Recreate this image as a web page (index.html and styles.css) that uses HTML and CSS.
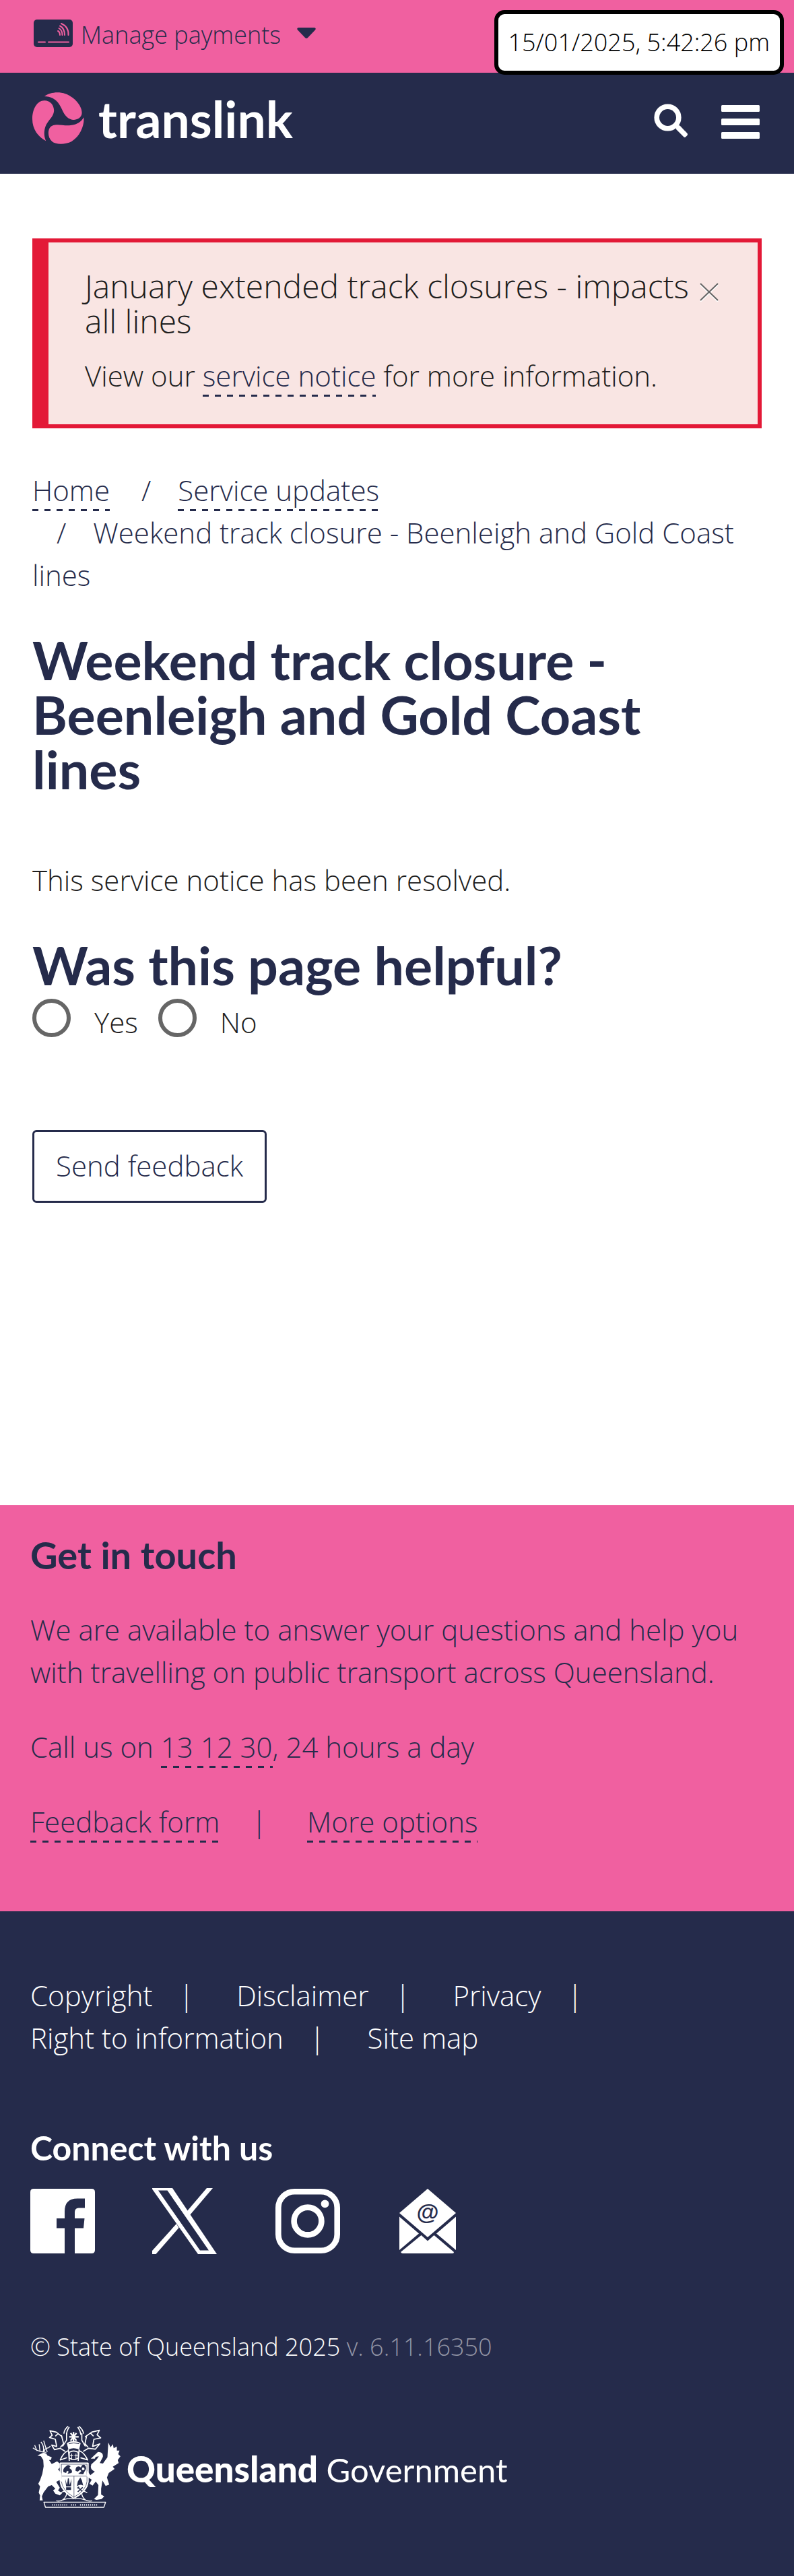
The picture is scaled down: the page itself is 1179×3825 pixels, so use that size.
FILE: index.html
```html
<!DOCTYPE html>
<html lang="en">
<head>
<meta charset="utf-8">
<meta name="viewport" content="width=device-width, initial-scale=1">
<title>Weekend track closure - Beenleigh and Gold Coast lines | Translink</title>
<link rel="stylesheet" href="styles.css">
</head>
<body>
<time class="stamp" datetime="2025-01-15T17:42:26">15/01/2025, 5:42:26 pm</time>

<div class="topbar">
  <button class="payments" type="button">
    <svg class="payments-card" viewBox="0 0 58 41" aria-hidden="true">
      <rect width="58" height="41" rx="5" fill="#252b4b"/>
      <g fill="none" stroke="#f060a0" stroke-width="2" stroke-linecap="round">
        <path d="M7 33.500H17M22 33.500H52"/>
        <path d="M36 17C38 18 39 20 39 23M37.500 13C41 15 42.500 18 42.500 23M39 9.500C44 12 46 17 46 23M41 6C48 9 52 15 51.500 23"/>
      </g>
    </svg>
    <span>Manage payments</span>
    <svg class="payments-caret" viewBox="0 0 28 16" aria-hidden="true"><path d="M2 0H26Q29 1 27 3.500L16 15Q14 17 12 15L1 3.500Q-1 1 2 0Z" fill="#252b4b"/></svg>
  </button>
</div>

<header class="header">
  <a class="brand" href="#">
    <svg class="brand-mark" viewBox="24 20 232 232" aria-hidden="true">
      <g fill="#f060a0">
        <path d="M78 38C110 15 165 12 205 45C240 72 250 105 244 122C235 145 200 152 178 130C160 112 158 95 145 75C130 50 105 38 78 38Z"/>
        <path d="M85 238C50 220 24 185 24 140C24 95 45 57 78 57C105 57 121 78 121 103C119 132 95 142 82 175C74 200 78 222 85 238Z"/>
        <path d="M254 132C258 165 240 215 200 240C170 255 130 255 112 240C92 222 92 190 105 175C125 155 160 172 195 168C225 164 243 152 254 132Z"/>
      </g>
    </svg>
    <span class="brand-name">translink</span>
  </a>
  <div class="tools">
    <button class="tool" type="button" aria-label="Search">
      <svg width="50" height="50" viewBox="0 0 50 50"><circle cx="20.500" cy="20.500" r="16.300" fill="none" stroke="#fff" stroke-width="7.600"/><path d="M33 34.500L36.500 32Q38 32 39 33L49.500 44Q50.500 45.500 49.500 47L47 49.500Q45.500 50.500 44 49L33.500 38.500Q32.500 37 33 34.500Z" fill="#fff"/></svg>
    </button>
    <button class="tool tool-menu" type="button" aria-label="Menu">
      <svg width="57" height="50" viewBox="0 0 57 50" fill="#fff"><rect width="57" height="10" rx="1.500"/><rect y="20" width="57" height="10" rx="1.500"/><rect y="40" width="57" height="10" rx="1.500"/></svg>
    </button>
  </div>
</header>

<main class="main">
  <section class="alert">
    <div class="alert-body">
      <h2 class="alert-title">January extended track closures - impacts all lines</h2>
      <p>View our <a class="link" href="#">service notice</a> for more information.</p>
    </div>
    <button class="alert-close" type="button" aria-label="Close">
      <svg width="28" height="28" viewBox="0 0 28 28" fill="none"><path d="M1 3L27 28M27 3L1 28" stroke="#fff" stroke-width="2"/><path d="M1 1L27 26M27 1L1 26" stroke="#666" stroke-width="2"/></svg>
    </button>
  </section>

  <nav aria-label="Breadcrumb">
    <ol class="crumbs">
      <li><a class="link" href="#">Home</a></li>
      <li><a class="link" href="#">Service updates</a></li>
      <li class="crumb-current">Weekend track closure - Beenleigh and Gold Coast lines</li>
    </ol>
  </nav>

  <h1 class="heading page-title">Weekend track closure - Beenleigh and Gold Coast lines</h1>
  <p class="notice">This service notice has been resolved.</p>

  <form class="feedback">
    <h2 class="heading" id="helpful">Was this page helpful?</h2>
    <div class="choices" role="radiogroup" aria-labelledby="helpful">
      <input class="radio" type="radio" name="helpful" id="helpful-yes"><label for="helpful-yes">Yes</label>
      <input class="radio" type="radio" name="helpful" id="helpful-no"><label for="helpful-no">No</label>
    </div>
    <button class="send" type="button">Send feedback</button>
  </form>
</main>

<section class="contact">
  <h2 class="contact-title">Get in touch</h2>
  <p>We are available to answer your questions and help you with travelling on public transport across Queensland.</p>
  <p>Call us on <a class="link" href="#">13 12 30</a>, 24 hours a day</p>
  <ul class="bar-list contact-links">
    <li><a class="link" href="#">Feedback form</a></li>
    <li><a class="link" href="#">More options</a></li>
  </ul>
</section>

<footer class="footer">
  <ul class="bar-list footer-links">
    <li><a href="#">Copyright</a></li>
    <li><a href="#">Disclaimer</a></li>
    <li><a href="#">Privacy</a></li>
    <li><a href="#">Right to information</a></li>
    <li><a href="#">Site map</a></li>
  </ul>
  <h2 class="connect-title">Connect with us</h2>
  <div class="social">
    <a href="#" aria-label="Facebook"><svg width="96" height="96" viewBox="0 0 96 96"><path fill="#fff" fill-rule="evenodd" d="M5 0H91Q96 0 96 5V91Q96 96 91 96H5Q0 96 0 91V5Q0 0 5 0ZM51 96V58.500H39V44H51V34C51 21 57 14.500 70 14.500H81V28.500H74C68 28.500 66 30 66 36V44H80.500L79 58.500H66V96Z"/></svg></a>
    <a href="#" aria-label="X"><svg width="98" height="98" viewBox="1 0 98 98" fill="#fff"><path fill-rule="evenodd" d="M0 0H31L97 98H69ZM10 3.500L72 92.500H85L23.500 3.500Z"/><path d="M82 0H91L57 40L53 34ZM37 53L0 94V98H6.500L40.500 59Z"/></svg></a>
    <a href="#" aria-label="Instagram"><svg width="96" height="96" viewBox="0 0 96 96" fill="none" stroke="#fff"><rect x="4.300" y="4.300" width="87.400" height="87.400" rx="24" stroke-width="8.600"/><circle cx="48" cy="48" r="20.400" stroke-width="8.600"/><circle cx="73.500" cy="22.300" r="5.900" fill="#fff" stroke="none"/></svg></a>
    <a href="#" aria-label="Email"><svg width="90" height="96" viewBox="-3 0 90 96" fill="#fff"><path d="M42 0L84 36L42 72L0 36Z"/><path d="M0 41.500L29 66.500L0 91ZM84 41.500L55 66.500L84 91Z"/><path d="M32.500 69L42 77.500L51.500 69L81 94Q81 96 79 96H5Q3 96 2 94Z"/><text class="mail-at" x="42" y="46" text-anchor="middle">@</text></svg></a>
  </div>
  <p class="legal">© State of Queensland 2025 <span class="version">v. 6.11.16350</span></p>
  <a class="gov" href="#">
    <svg class="gov-crest" width="131" height="122" viewBox="26 20 392 366" fill="none" stroke="#fff" stroke-width="5" stroke-linejoin="round" aria-hidden="true">
      <!-- crest and mantling -->
      <path d="M185 22Q168 35 166 55M190 25Q178 42 178 60M233 22Q250 35 254 55M228 25Q240 42 242 60"/>
      <path d="M160 70L132 48L104 42L114 62L102 72L128 80L134 112L112 106L124 126L150 120L172 134M140 55L128 66M178 52V84L160 112M155 62L165 100L150 116"/>
      <path d="M260 70L290 48L324 40L314 60L330 74L300 80L294 112L326 100L306 124L276 120L252 134M284 52L298 66M246 52V84L262 112M268 62L260 100L274 116"/>
      <path d="M196 52L222 86M222 52L196 86M190 69H232M209 48V96" stroke-width="7"/>
      <path d="M182 98Q209 82 238 98L232 122Q209 112 188 122Z" fill="#fff"/>
      <path d="M188 100Q209 92 234 100" stroke="#252b4b" stroke-width="3"/>
      <path d="M186 124L190 176M234 124L230 176M186 130Q162 140 150 172L180 162M234 130Q258 140 272 172L240 162M190 138Q209 126 230 138V164Q209 176 190 164Z"/>
      <path d="M201 144V172M193 153H208M220 144V172M213 153H228" stroke-width="3"/>
      <!-- shield -->
      <path d="M149 185H275V270Q272 312 211 345Q152 312 149 270Z" fill="#fff" stroke-width="3"/>
      <path d="M155 191H269V268Q266 306 211 338Q158 306 155 268ZM153 244H271M211 244V340" stroke="#252b4b" stroke-width="2"/>
      <g fill="#252b4b" stroke="none">
        <path d="M176 200Q184 190 196 200L190 208Q208 218 200 230L182 234L188 224L180 220L176 230L164 226Q160 210 176 200Z"/>
        <path d="M222 204Q234 196 242 206Q246 190 258 194Q272 206 258 224L252 236L230 234L244 222L238 216L228 224L218 220Q218 210 222 204ZM248 206Q258 202 258 214Q252 222 246 214Z" fill-rule="evenodd"/>
        <path d="M172 256L180 284L184 254H188L192 284L200 256L198 290H176ZM176 294H198V306H176Z"/>
        <path d="M239 250L246 262L252 286Q238 278 224 290L228 268Z"/>
      </g>
      <path d="M228 294L250 314M250 294L228 314M226 298L234 292" stroke="#252b4b" stroke-width="5"/>
      <!-- stag -->
      <path d="M80 142Q74 120 98 118M88 138Q52 136 28 118M46 132L36 106M60 136L56 102M74 138Q80 110 64 92M92 136Q82 108 76 86M98 118L106 110" stroke-width="4"/>
      <path fill="#fff" stroke="none" d="M48 152L74 140L88 144L92 152L112 160L108 172L100 172L112 190L136 178L148 188V206L140 214L156 232L158 270L146 262L132 270L148 296L140 308L158 320L148 330L128 322L118 308L128 300L112 284L96 290L76 316L68 334L72 352H58L60 330L54 318L60 290L52 278L60 262L70 234L76 200L74 172L64 156Z"/>
      <!-- crane -->
      <path fill="#fff" stroke="none" d="M286 166L318 136Q342 136 340 158L326 186L340 188L360 160L364 94L374 116L384 102L388 120L402 112L402 130L414 130L408 146L418 156L406 172L410 186L384 202L392 212L366 230L358 250L368 282L352 288L338 264L332 300V326L346 334L334 346L312 350L300 346L318 328L320 284L308 268L294 286L280 278L290 260L266 244L270 220L284 240L304 224Q280 214 288 192L312 170L322 156L308 158L304 166Z"/>
      <!-- scroll -->
      <path d="M152 318Q176 304 178 324Q176 338 160 350Q148 358 132 354M160 350Q196 340 208 346M270 318Q246 304 246 324Q248 338 262 350Q276 358 292 354M262 350Q228 340 214 346" stroke-width="4"/>
      <path d="M77 360H352L344 383H84Z" fill="#252b4b" stroke-width="4"/>
      <path d="M114 372H180M198 372H220M238 372H316" stroke-width="8" stroke-dasharray="4 5" stroke="#c4c6d2"/>
    </svg>
    <span class="gov-name"><strong>Queensland</strong> Government</span>
  </a>
</footer>
</body>
</html>
```
FILE: styles.css
```css
* {
  box-sizing: border-box;
}

body {
  margin: 0;
  position: relative;
  background: #fff;
  color: #1d1d1d;
  font-family: "Open Sans", sans-serif;
  font-size: 42px;
  font-weight: 300;
  line-height: 63px;
}

h1, h2, p, ol, ul {
  margin: 0;
  padding: 0;
  font-weight: inherit;
  list-style: none;
}

button {
  margin: 0;
  padding: 0;
  border: 0;
  background: none;
  color: inherit;
  font: inherit;
}

a {
  color: inherit;
  text-decoration: none;
}

svg {
  display: block;
  flex: none;
}

.link {
  padding-bottom: 3px;
  color: #252b4b;
  background: repeating-linear-gradient(90deg, #252b4b 0 9px, transparent 9px 18px) left bottom / 100% 3px no-repeat;
}

.stamp {
  position: absolute;
  top: 15px;
  right: 15px;
  padding: 15px;
  border: 6px solid #000;
  border-radius: 15px;
  background: #fff;
  color: #000;
  font-size: 36px;
  line-height: 54px;
}

.topbar {
  height: 108px;
  padding: 25px 48px;
  background: #f060a0;
  color: #252b4b;
}

.payments {
  display: flex;
  align-items: center;
  font-size: 36px;
  line-height: 54px;
}

.payments-card {
  width: 58px;
  height: 41px;
  margin: 0 12px 6px 2px;
}

.payments-caret {
  width: 28px;
  height: 16px;
  margin: 0 0 6px 24px;
}

.header {
  display: flex;
  align-items: center;
  justify-content: space-between;
  height: 150px;
  padding: 0 51px 0 48px;
  background: #252b4b;
  color: #fff;
}

.brand {
  display: flex;
  align-items: center;
  gap: 21px;
  margin-bottom: 15px;
}

.brand-mark {
  width: 77px;
  height: 77px;
}

.brand-name {
  font: 700 75px/78px Lato, sans-serif;
}

.tools {
  display: flex;
  gap: 50px;
  margin-bottom: 8px;
}

.tool-menu {
  padding-top: 4px;
}

.main {
  padding: 96px 48px 449px;
}

.alert {
  display: flex;
  align-items: flex-start;
  justify-content: space-between;
  padding: 39px 58px 41px 54px;
  border: 6px solid #e31937;
  border-left-width: 24px;
  background: #f9e5e3;
}

.alert-title {
  margin-bottom: 23px;
  font-size: 48px;
  line-height: 52px;
}

.alert-close {
  padding-top: 21px;
}

.crumbs {
  margin-top: 60px;
  color: #252b4b;
}

.crumbs li {
  display: inline;
}

.crumbs li + li::before {
  content: "/";
  margin: 0 40px 0 36px;
}

.crumbs .crumb-current {
  display: block;
}

.heading {
  color: #252b4b;
  font: 700 79px/81px Lato, sans-serif;
}

.page-title {
  margin-top: 54px;
}

.notice {
  margin: 93px 0 54px;
}

.choices {
  display: flex;
  align-items: flex-start;
  margin-top: 10px;
}

.choices label {
  margin: 3px 30px 0 35px;
}

.radio {
  appearance: none;
  flex: none;
  width: 57px;
  height: 57px;
  margin: 0;
  border: 6px solid #666;
  border-radius: 50%;
}

.radio:checked {
  background: radial-gradient(#252b4b 50%, transparent 52%);
}

.send {
  margin-top: 129px;
  padding: 18px 32px 21px;
  border: 3px solid #252b4b;
  border-radius: 6px;
  color: #252b4b;
}

.contact {
  padding: 42px 45px 102px;
  background: #f060a0;
  color: #252b4b;
}

.contact-title {
  margin-bottom: 48px;
  font: 700 56px/63px Lato, sans-serif;
}

.contact p {
  margin-bottom: 48px;
}

.bar-list {
  display: flex;
  flex-wrap: wrap;
}

.bar-list li:not(:last-child)::after {
  content: "|";
}

.contact-links li::after {
  margin: 0 60px 0 47px;
}

.footer {
  padding: 93px 45px 102px;
  background: #252b4b;
  color: #fff;
}

.footer-links {
  max-width: 950px;
}

.footer-links li::after {
  margin: 0 63px 0 39px;
}

.connect-title {
  margin-top: 101px;
  font: 700 50px/63px Lato, sans-serif;
}

.social {
  display: flex;
  align-items: center;
  gap: 85px;
  margin-top: 28px;
}

.mail-at {
  fill: #252b4b;
  font: 700 34px "Liberation Sans", sans-serif;
}

.legal {
  margin-top: 111px;
  font-size: 36px;
  line-height: 54px;
}

.version {
  color: #9395a5;
}

.gov {
  display: flex;
  align-items: center;
  gap: 9px;
  margin-top: 90px;
  padding-left: 3px;
}

.gov-name {
  padding-top: 6px;
  font: 400 49px/60px Lato, sans-serif;
}

.gov-name strong {
  font-size: 53px;
  font-weight: 900;
}
```
